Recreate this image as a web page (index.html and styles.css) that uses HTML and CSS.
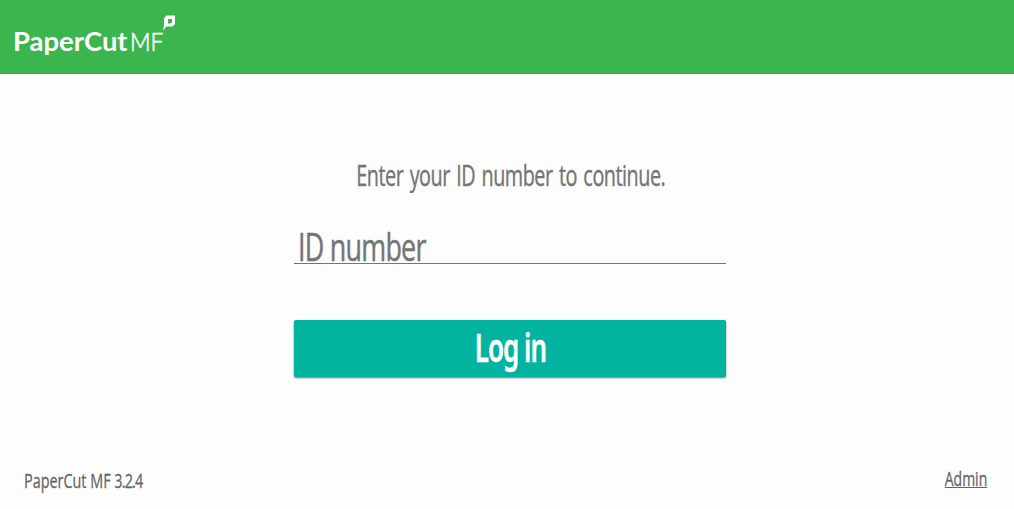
FILE: index.html
```html
<!DOCTYPE html>
<html lang="en">
<head>
<meta charset="utf-8">
<title>PaperCut MF</title>
<link rel="stylesheet" href="styles.css">
</head>
<body>
<header class="header">
  <div class="logo">
    <span class="logo-name">PaperCut</span>
    <span class="logo-mf">MF</span>
    <svg class="logo-mark" width="15" height="18" viewBox="0 0 15 18">
      <path fill="#fff" fill-rule="evenodd" d="M4.500 1.500H13V10L10.500 12.500H5.500C3.500 12.500 3.500 14.500 1 16.500L2 11V4ZM6 5V9.500h2.500l1.500-1V5Z"/>
    </svg>
  </div>
</header>
<main class="main">
  <form class="login" onsubmit="return false">
    <p class="prompt"><span class="prompt-text">Enter your ID number to continue.</span></p>
    <div class="field"><span class="field-text">ID number</span></div>
    <button class="button"><span class="button-text">Log in</span></button>
  </form>
</main>
<footer class="footer">
  <span class="version">PaperCut MF <span class="version-number">3.2.4</span></span>
  <a class="admin">Admin</a>
</footer>
</body>
</html>
```
FILE: styles.css
```css
* { box-sizing: border-box; }
body {
  margin: 0;
  height: 509px;
  display: flex;
  flex-direction: column;
  overflow: hidden;
  background: #fdfdfd;
  color: #757575;
  font-family: "Open Sans", "Noto Sans", sans-serif;
}
span, a { white-space: nowrap; }
.header {
  height: 74px;
  flex: none;
  padding: 14px 0 0 13px;
  background: #3bb54d;
  border-bottom: 1px solid #35ae49;
}
.logo { display: flex; color: #fff; font-family: Lato, sans-serif; line-height: 32px; }
.logo-name {
  width: 117px;
  padding-top: 11px;
  font-size: 26px;
  font-weight: 700;
  transform: scaleX(1.055);
  transform-origin: 0 0;
}
.logo-mf {
  width: 32px;
  padding-top: 11px;
  font-size: 26px;
  font-weight: 300;
  -webkit-text-stroke: .6px #fff;
  transform: scaleX(.87);
  transform-origin: 0 0;
}
.logo-mark { flex: none; }
.main { flex: 1; padding-left: 6px; display: flex; justify-content: center; }
.login { width: 432px; padding-top: 81px; }
.prompt {
  margin: 0;
  height: 40px;
  line-height: 40px;
  font-size: 29px;
  display: flex;
  justify-content: center;
}
.prompt-text {
  letter-spacing: -.7px;
  word-spacing: 2.5px;
  -webkit-text-stroke: .4px #757575;
  transform: translateX(.5px) scaleX(.683);
}
.field {
  margin-top: 33px;
  height: 36px;
  padding-left: 4px;
  line-height: 36px;
  font-size: 39px;
  border-bottom: 1px solid #757575;
}
.field-text {
  display: inline-block;
  letter-spacing: -1.1px;
  -webkit-text-stroke: .5px #757575;
  transform: scaleX(.69);
  transform-origin: 0 50%;
}
.button {
  margin-top: 56px;
  width: 100%;
  height: 57px;
  padding: 0 0 3px;
  display: flex;
  align-items: center;
  justify-content: center;
  border: 0;
  border-radius: 2px;
  background: #02b3a0;
  box-shadow: 0 1px 2px rgba(0, 0, 0, .55);
  color: #fff;
  font: 600 40px/54px "Noto Sans", sans-serif;
}
.button-text {
  letter-spacing: -1.5px;
  -webkit-text-stroke: .4px #fff;
  transform: translateX(.5px) scaleX(.65);
}
.footer {
  flex: none;
  height: 43px;
  padding: 0 27px 0 24px;
  display: flex;
  justify-content: space-between;
  font-size: 20px;
  line-height: 30px;
  color: #666;
}
.version {
  -webkit-text-stroke: .3px #666;
  transform: scaleX(.72);
  transform-origin: 0 50%;
}
.version-number { letter-spacing: -1.2px; }
.admin {
  margin-top: -2px;
  text-decoration: underline;
  text-decoration-thickness: 1px;
  text-underline-offset: 1px;
  -webkit-text-stroke: .3px #666;
  transform: translateX(.5px) scaleX(.7);
  transform-origin: 100% 50%;
}
```
